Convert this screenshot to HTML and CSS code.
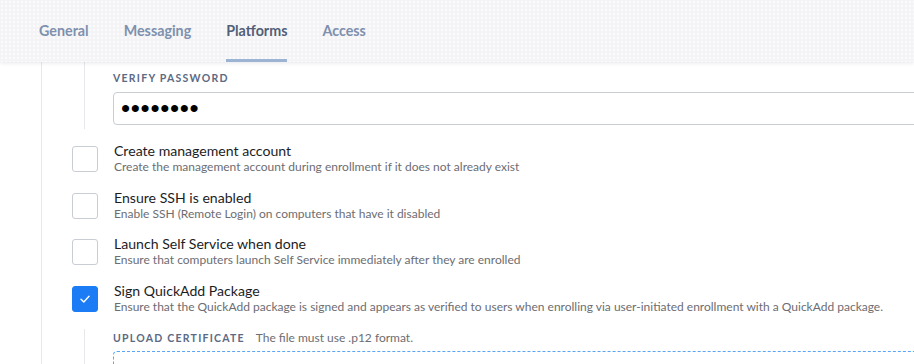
FILE: index.html
```html
<!DOCTYPE html>
<html lang="en">

<head>
    <meta charset="UTF-8">
    <meta name="viewport" content="width=device-width, initial-scale=1.0">
    <title>Enrollment Settings</title>
    <link rel="stylesheet" href="styles.css">
</head>

<body>

    <!-- Tabs -->
    <header class="tabbar">
        <nav class="tabs">
            <a class="tab">General</a>
            <a class="tab">Messaging</a>
            <a class="tab active">Platforms</a>
            <a class="tab">Access</a>
        </nav>
    </header>

    <main class="content">
        <div class="nested">
            <label class="field-label" for="verifyPassword">Verify Password</label>
            <input class="text-input" type="password" id="verifyPassword" value="password">
        </div>

        <div class="option">
            <span class="checkbox"></span>
            <div class="option-text">
                <div class="option-title">Create management account</div>
                <div class="option-desc">Create the management account during enrollment if it does not already exist</div>
            </div>
        </div>

        <div class="option">
            <span class="checkbox"></span>
            <div class="option-text">
                <div class="option-title">Ensure SSH is enabled</div>
                <div class="option-desc">Enable SSH (Remote Login) on computers that have it disabled</div>
            </div>
        </div>

        <div class="option">
            <span class="checkbox"></span>
            <div class="option-text">
                <div class="option-title">Launch Self Service when done</div>
                <div class="option-desc">Ensure that computers launch Self Service immediately after they are enrolled</div>
            </div>
        </div>

        <div class="option">
            <span class="checkbox checked">
                <svg width="12" height="10" viewBox="0 0 12 10">
                    <path d="M2 5.2 L4.8 8 L10 2.2" fill="none" stroke="#fff" stroke-width="1.4" stroke-linecap="round" stroke-linejoin="round"/>
                </svg>
            </span>
            <div class="option-text">
                <div class="option-title">Sign QuickAdd Package</div>
                <div class="option-desc">Ensure that the QuickAdd package is signed and appears as verified to users when enrolling via user-initiated enrollment with a QuickAdd package.</div>
            </div>
        </div>

        <!-- Certificate upload -->
        <div class="nested upload">
            <div class="field-label">Upload Certificate <span class="hint">The file must use .p12 format.</span></div>
            <div class="dropzone"></div>
        </div>
    </main>

</body>

</html>
```

FILE: styles.css
```css
body {
    font-family: Lato, "Open Sans", sans-serif;
    background-color: #fff;
    margin: 0;
    padding: 0;
    overflow: hidden;
    height: 364px;
}

.tabbar {
    position: relative;
    height: 62px;
    background-color: #f4f4f6;
    background-image: radial-gradient(circle, #fbfbfc 1px, transparent 1.4px);
    background-size: 4px 4px;
    box-shadow: 0 1px 4px rgba(40, 50, 80, 0.12);
    z-index: 1;
}

.tabs {
    display: flex;
    gap: 35px;
    padding-left: 39px;
    height: 100%;
}

.tab {
    display: flex;
    align-items: center;
    height: 100%;
    box-sizing: border-box;
    padding-top: 2px;
    font-size: 14.3px;
    font-weight: 700;
    color: #7e90ad;
    border-bottom: 3px solid transparent;
}

.tab.active {
    color: #525f78;
    border-bottom-color: #9cb3d3;
}

.content {
    margin-left: 41px;
    border-left: 1px solid #e6e8ec;
    height: 302px;
    overflow: hidden;
}

.nested {
    margin-left: 42px;
    border-left: 1px solid #e6e8ec;
    padding-left: 28px;
    padding-top: 10px;
    padding-bottom: 4px;
}

.field-label {
    display: block;
    font-size: 10.5px;
    line-height: 13px;
    font-weight: 700;
    letter-spacing: 1.25px;
    text-transform: uppercase;
    color: #5c6a84;
    margin-bottom: 7px;
}

.text-input {
    display: block;
    width: calc(100% + 40px);
    height: 33px;
    box-sizing: border-box;
    border: 1px solid #c9cdd4;
    border-radius: 4px;
    padding: 0 7px;
    font-size: 26px;
    letter-spacing: 0.7px;
    color: #000;
    font-family: "Liberation Sans", sans-serif;
}

.option {
    display: flex;
    gap: 16px;
    padding-left: 30px;
    height: 46.5px;
}

.nested + .option {
    margin-top: 17px;
}

.checkbox {
    flex: none;
    width: 26px;
    height: 26px;
    box-sizing: border-box;
    border: 1px solid #c9cdd4;
    border-radius: 3px;
    display: flex;
    align-items: center;
    justify-content: center;
}

.checkbox.checked {
    background-color: #1b7cf5;
    border-color: #1b7cf5;
}

.option-text {
    margin-top: -4px;
    white-space: nowrap;
}

.option-title {
    font-size: 14.1px;
    color: #1d1d1f;
    line-height: 17px;
}

.option-desc {
    font-size: 12px;
    color: #6d6d72;
    line-height: 15px;
}

.upload {
    margin-top: -3px;
    padding-top: 2px;
}

.upload .field-label {
    margin-bottom: 6px;
}

.hint {
    font-weight: 400;
    letter-spacing: 0;
    text-transform: none;
    color: #6d6d72;
    font-size: 12px;
    margin-left: 7px;
}

.dropzone {
    width: calc(100% + 40px);
    height: 60px;
    border: 1px dashed #59a6f6;
    border-radius: 4px;
}
```
